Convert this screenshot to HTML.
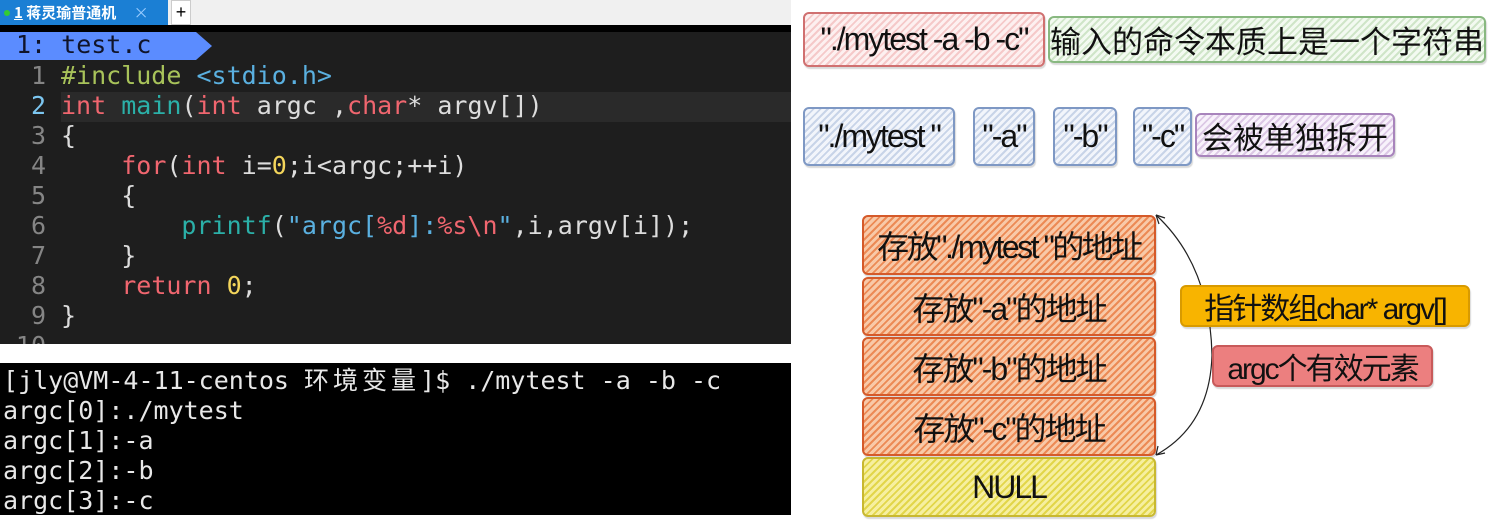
<!DOCTYPE html>
<html><head><meta charset="utf-8"><style>
body{margin:0;width:1491px;height:521px;background:#fff;position:relative;overflow:hidden;font-family:"Liberation Sans","Noto Sans CJK SC",sans-serif}
.a{position:absolute}
.mono{font-family:"DejaVu Sans Mono","Liberation Mono","Noto Sans CJK SC",monospace;font-size:25px;white-space:pre}
.ln{position:absolute;left:0;height:30px;line-height:30px}
.n{display:inline-block;width:46px;text-align:right;color:#858585;margin-right:15px}
.k{color:#f0666f}.f{color:#2bb0a8}.s{color:#5ab0e0}.pp{color:#a8c35a}.num{color:#f3d55b}.w{color:#ddd}
.box{position:absolute;box-sizing:border-box;border-radius:6px;display:flex;align-items:center;justify-content:center;font-size:32px;color:#111;white-space:nowrap;letter-spacing:-2px;box-shadow:1px 2px 1px rgba(0,0,0,.15)}
.cj{font-size:31px;letter-spacing:0}
.hr{background:repeating-linear-gradient(135deg,#f5c9c9 0 2px,#fdf0f0 2px 5px);border:2px solid #d07070}
.hg{background:repeating-linear-gradient(135deg,#cfe5c8 0 2px,#f3faf1 2px 5px);border:2px solid #88b880}
.hb{background:repeating-linear-gradient(135deg,#c8d4e8 0 2px,#f2f5fb 2px 5px);border:2px solid #7e98c4}
.hp{background:repeating-linear-gradient(135deg,#dcc8e5 0 2px,#f8f2fb 2px 5px);border:2px solid #a884bc}
.ho{background:repeating-linear-gradient(135deg,#ec8a55 0 2px,#f8c9a8 2px 5px);border:2px solid #d55a2a}
.hy{background:repeating-linear-gradient(135deg,#e2d64a 0 2px,#f6efa0 2px 5px);border:2px solid #c8b830}
</style></head><body>
<div class="a" style="left:0;top:0;width:791px;height:25px;background:#f0f0f0;border-bottom:1px solid #ccc"></div>
<div class="a" style="left:0;top:0;width:168px;height:25px;background:#1b7fd4;color:#fff;font-size:15px;font-weight:bold;line-height:25px;font-family:'Noto Sans CJK SC',sans-serif"><span style="display:inline-block;width:6px;height:6px;border-radius:3px;background:#3c3;margin:0 4px 2px 4px"></span><u>1</u> 蒋灵瑜普通机 <span style="font-weight:normal;color:#9cf;margin-left:14px">×</span></div>
<div class="a" style="left:171px;top:0;width:20px;height:25px;background:#fff;border:1px solid #ccc;box-sizing:border-box;text-align:center;line-height:23px;font-size:18px">+</div>
<div class="a" style="left:0;top:25px;width:791px;height:7px;background:#000"></div>
<div class="a mono" style="left:0;top:32px;width:791px;height:312px;background:#1e1e1e;overflow:hidden">
<div class="a" style="left:0;top:0;width:196px;height:28px;background:#5b8cff"></div>
<div class="a" style="left:196px;top:0;width:0;height:0;border-top:14px solid transparent;border-bottom:14px solid transparent;border-left:16px solid #5b8cff"></div>
<div class="ln" style="top:-1px;left:16px;color:#10142a;line-height:28px">1: test.c</div>
<div class="a" style="left:61px;top:60px;width:730px;height:30px;background:#2a2a2a"></div>
<div class="ln" style="top:29px"><span class="n">1</span><span class="pp">#include </span><span class="s">&lt;stdio.h&gt;</span></div>
<div class="ln" style="top:59px"><span class="n" style="color:#7cc6f0">2</span><span class="k">int</span> <span class="f">main</span><span class="w">(</span><span class="k">int</span><span class="w"> argc ,</span><span class="k">char</span><span class="w">* argv[])</span></div>
<div class="ln w" style="top:89px"><span class="n">3</span>{</div>
<div class="ln w" style="top:119px"><span class="n">4</span>    <span class="k">for</span>(<span class="k">int</span> i=<span class="num">0</span>;i&lt;argc;++i)</div>
<div class="ln w" style="top:149px"><span class="n">5</span>    {</div>
<div class="ln w" style="top:179px"><span class="n">6</span>        <span class="f">printf</span>(<span class="s">"argc[</span><span class="k">%d</span><span class="s">]:</span><span class="k">%s\n</span><span class="s">"</span>,i,argv[i]);</div>
<div class="ln w" style="top:209px"><span class="n">7</span>    }</div>
<div class="ln w" style="top:239px"><span class="n">8</span>    <span class="k">return</span> <span class="num">0</span>;</div>
<div class="ln w" style="top:269px"><span class="n">9</span>}</div>
<div class="ln w" style="top:299px"><span class="n">10</span></div>
</div>
<div class="a mono" style="left:0;top:363px;width:791px;height:152px;background:#000;color:#e8e8e8;overflow:hidden">
<div class="ln" style="top:3px;left:3px">[jly@VM-4-11-centos <span style="letter-spacing:4px">环境变量</span>]$ ./mytest -a -b -c</div>
<div class="ln" style="top:33px;left:3px">argc[0]:./mytest</div>
<div class="ln" style="top:63px;left:3px">argc[1]:-a</div>
<div class="ln" style="top:93px;left:3px">argc[2]:-b</div>
<div class="ln" style="top:123px;left:3px">argc[3]:-c</div>
</div>
<div class="box hr" style="left:803px;top:12px;width:242px;height:55px">"./mytest -a -b -c"</div>
<div class="box hg cj" style="left:1048px;top:16px;width:438px;height:47px">输入的命令本质上是一个字符串</div>
<div class="box hb" style="left:803px;top:107px;width:152px;height:59px">"./mytest "</div>
<div class="box hb" style="left:973px;top:107px;width:62px;height:59px">"-a"</div>
<div class="box hb" style="left:1053px;top:107px;width:64px;height:59px">"-b"</div>
<div class="box hb" style="left:1133px;top:107px;width:59px;height:59px">"-c"</div>
<div class="box hp cj" style="left:1195px;top:113px;width:200px;height:44px">会被单独拆开</div>
<div class="box ho" style="left:862px;top:215px;width:294px;height:60px;letter-spacing:-2.5px">存放"./mytest "的地址</div>
<div class="box ho" style="left:862px;top:277px;width:294px;height:59px">存放"-a"的地址</div>
<div class="box ho" style="left:862px;top:337px;width:294px;height:59px">存放"-b"的地址</div>
<div class="box ho" style="left:862px;top:397px;width:294px;height:59px">存放"-c"的地址</div>
<div class="box hy" style="left:862px;top:457px;width:294px;height:60px">NULL</div>
<svg class="a" style="left:1140px;top:205px" width="80" height="265"><path d="M16 10 Q70 60 72 150 Q70 220 16 250" fill="none" stroke="#222" stroke-width="1.2"/><path d="M16 10 l3 9 M16 10 l9 3 M16 250 l9 -2 M16 250 l2 -9" stroke="#222" stroke-width="1.2"/></svg>
<div class="box" style="left:1180px;top:285px;width:290px;height:42px;background:#f8b400;border:2px solid #d89a00;font-size:30px">指针数组char* argv[]</div>
<div class="box" style="left:1212px;top:345px;width:221px;height:42px;background:#ec7f7f;border:2px solid #c85a5a;font-size:30px">argc个有效元素</div>
</body></html>
